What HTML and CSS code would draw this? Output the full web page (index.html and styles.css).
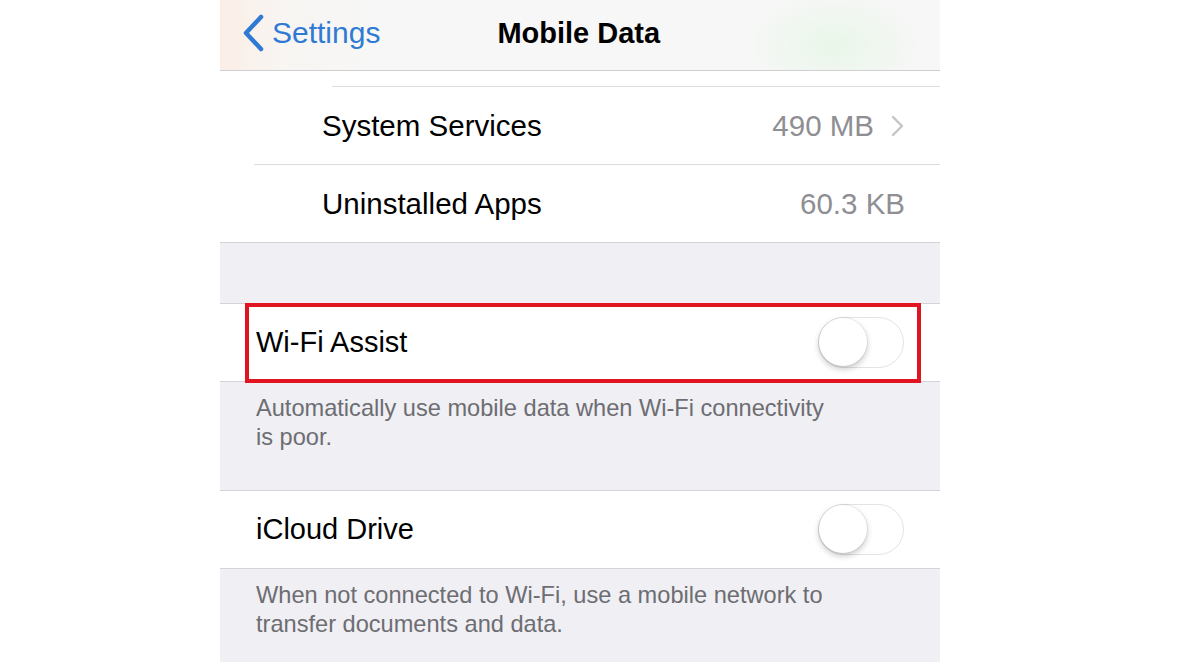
FILE: index.html
```html
<!DOCTYPE html>
<html lang="en">
<head>
    <meta charset="UTF-8">
    <meta name="viewport" content="width=device-width, initial-scale=1.0">
    <title>Mobile Data</title>
    <link rel="stylesheet" href="styles.css">
</head>
<body>
    <div class="phone">
        <header class="navbar">
            <a class="back" href="#">
                <svg class="back-icon" width="24" height="38" viewBox="0 0 24 38">
                    <path d="M20 3 L5 19 L20 35" fill="none" stroke="#2f7ad3" stroke-width="4.5" stroke-linecap="round" stroke-linejoin="round"/>
                </svg>
                <span>Settings</span>
            </a>
            <h1>Mobile Data</h1>
        </header>

        <section class="group">
            <div class="stub"></div>
            <div class="row row-app">
                <span class="label">System Services</span>
                <span class="value">490 MB</span>
                <svg class="chevron" width="13" height="22" viewBox="0 0 13 22">
                    <path d="M2 2 L11 11 L2 20" fill="none" stroke="#c4c4c9" stroke-width="2.4" stroke-linecap="round" stroke-linejoin="round"/>
                </svg>
            </div>
            <div class="row row-app row-last">
                <span class="label">Uninstalled Apps</span>
                <span class="value">60.3 KB</span>
            </div>
        </section>

        <div class="gap"></div>

        <section class="group">
            <div class="row row-last">
                <span class="label">Wi-Fi Assist</span>
                <span class="switch"><span class="knob"></span></span>
                <span class="highlight"></span>
            </div>
        </section>
        <p class="note">Automatically use mobile data when Wi-Fi connectivity<br>is poor.</p>

        <section class="group">
            <div class="row row-last">
                <span class="label">iCloud Drive</span>
                <span class="switch"><span class="knob"></span></span>
            </div>
        </section>
        <p class="note">When not connected to Wi-Fi, use a mobile network to<br>transfer documents and data.</p>
    </div>
</body>
</html>
```

FILE: styles.css
```css
body {
    margin: 0;
    padding: 0;
    background: #ffffff;
    font-family: "Liberation Sans", Arial, sans-serif;
    color: #000000;
}

.phone {
    width: 720px;
    height: 662px;
    margin-left: 220px;
    background: #efeff4;
    overflow: hidden;
}

.navbar {
    height: 66px;
    padding-bottom: 4px;
    display: flex;
    align-items: center;
    border-bottom: 1px solid #cfcfd2;
    background:
        radial-gradient(ellipse 90px 55px at 615px 45px, rgba(215, 245, 215, 0.45), rgba(215, 245, 215, 0)),
        linear-gradient(to right, #fbeee6 0px, #f8f5f2 60px, #f7f7f7 160px, #f7f7f7 100%);
}

.back {
    display: flex;
    align-items: center;
    gap: 7px;
    padding-left: 21px;
    color: #2f7ad3;
    text-decoration: none;
    font-size: 30px;
}

.back-icon {
    display: block;
}

.navbar h1 {
    margin: 0 0 0 117px;
    font-size: 29px;
    font-weight: bold;
}

.group {
    background: #ffffff;
    border-top: 1px solid #d3d3d8;
    border-bottom: 1px solid #d3d3d8;
}

.group:first-of-type {
    border-top: 0;
}

.stub {
    height: 15px;
    border-bottom: 1px solid #dcdce0;
    margin-left: 112px;
}

.row {
    height: 77px;
    display: flex;
    align-items: center;
    padding: 0 36px;
    position: relative;
    font-size: 29px;
    border-bottom: 1px solid #dcdce0;
}

.row-app {
    margin-left: 34px;
    padding-left: 68px;
    padding-right: 35px;
    font-size: 29.5px;
}

.row-last {
    border-bottom: 0;
}

.label {
    flex: 1;
}

.value {
    color: #8e8e93;
}

.chevron {
    margin-left: 17px;
    margin-right: 1px;
}

.gap {
    height: 60px;
}

.switch {
    width: 84px;
    height: 49px;
    border: 1px solid #e3e3e6;
    border-radius: 26px;
    background: #ffffff;
    position: relative;
}

.knob {
    position: absolute;
    left: 0;
    top: 0;
    width: 48px;
    height: 48px;
    border-radius: 50%;
    background: #ffffff;
    box-shadow: 0 3px 6px rgba(0, 0, 0, 0.22), 0 0 0 1px rgba(0, 0, 0, 0.06);
}

.highlight {
    position: absolute;
    left: 25px;
    top: -1px;
    width: 668px;
    height: 72px;
    border: 4px solid #e11422;
}

.note {
    margin: 0;
    padding: 12px 36px 38px;
    font-size: 23.6px;
    line-height: 29px;
    color: #6d6d72;
}
```
